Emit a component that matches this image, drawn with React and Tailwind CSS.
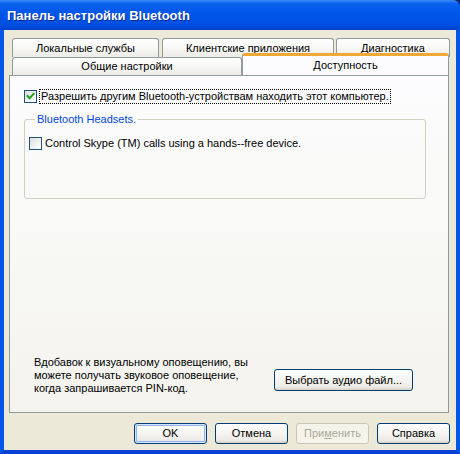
import React from "react";

function CheckBox({ checked }) {
  return (
    <div className="w-[13px] h-[13px] shrink-0 border border-[#1C5180] bg-[linear-gradient(135deg,#DCDCD7_0%,#F4F4F1_60%,#FFFFFF_100%)] flex items-center justify-center">
      {checked && (
        <svg width="11" height="11" viewBox="0 0 11 11">
          <polyline points="2.5,5 4.5,7.3 8.7,2.8" fill="none" stroke="#21A121" strokeWidth="2" strokeLinecap="square" />
        </svg>
      )}
    </div>
  );
}

function Btn({ children, className = "", def = false, disabled = false }) {
  const base = disabled
    ? "border-[#C9C7BA] bg-[#F5F4EA] text-[#ACA899]"
    : "border-[#003C74] bg-[linear-gradient(180deg,#FFFFFF_0%,#F6F6F3_40%,#ECEBE6_85%,#D6D0C5_100%)] text-black";
  const ring = def ? "shadow-[inset_0_0_0_1px_#CEE7FF,inset_0_0_0_2px_#98B4EE]" : "";
  return (
    <div className={`h-[21px] border rounded-[3px] flex items-center justify-center ${base} ${ring} ${className}`}>
      {children}
    </div>
  );
}

function Tab({ children, className = "" }) {
  return (
    <div className={`border border-b-0 border-[#919B9C] rounded-t-[3px] bg-[linear-gradient(180deg,#FFFFFF_0%,#F7F7F5_50%,#ECEBE6_100%)] flex items-center justify-center ${className}`}>
      {children}
    </div>
  );
}

export default function App() {
  return (
    <div className="w-[460px] h-[454px] flex flex-col overflow-hidden bg-[#0A246A] font-['Liberation_Sans',Arial,sans-serif] text-[11px] text-black">
      <div className="h-[30px] shrink-0 rounded-tr-[7px] bg-[linear-gradient(180deg,#3D8DF7_0%,#0A62F0_12%,#0056E8_45%,#0051E2_80%,#0042CF_100%)] flex items-center pl-[7px]">
        <span className="text-white font-bold text-[13px] leading-none [text-shadow:1px_1px_0_#0A2A9A]">
          Панель настройки Bluetooth
        </span>
      </div>
      <div className="flex-1 border-x-4 border-b-4 border-x-[#0556E8] border-b-[#0840D4] bg-[#ECE9D8] flex flex-col pt-[8px]">
        {/* tab strip */}
        <div className="pl-[8px] flex flex-col">
          <div className="h-[19px] flex gap-[3px]">
            <Tab className="w-[147px]">Локальные службы</Tab>
            <Tab className="w-[172px]">Клиентские приложения</Tab>
            <Tab className="w-[114px] ml-[-1px]">Диагностика</Tab>
          </div>
          <div className="h-[18px] flex">
            <Tab className="w-[230px] h-[18px]">Общие настройки</Tab>
            <div className="relative z-10 w-[207px] h-[22px] -mt-[4px] border border-b-0 border-[#919B9C] border-t-[3px] border-t-[#F1A834] rounded-t-[3px] bg-[#FCFCFE] flex items-center justify-center">
              Доступность
            </div>
          </div>
        </div>
        {/* panel */}
        <div className="ml-[5px] w-[440px] h-[338px] border border-[#919B9C] bg-[linear-gradient(180deg,#FCFCFE_0%,#F8F8F5_50%,#F4F3EE_100%)] flex flex-col">
          <div className="ml-[14px] mt-[13px] h-[15px] flex items-center">
            <CheckBox checked />
            <span className="ml-[2px] h-[15px] px-[1px] border border-dotted border-black flex items-center leading-none">
              Разрешить другим Bluetooth-устройствам находить этот компьютер.
            </span>
          </div>
          <fieldset className="ml-[14px] mt-[9px] w-[402px] h-[86px] border border-[#D0D0BF] rounded-[3px] pl-[4px]">
            <legend className="ml-[6px] px-[2px] text-[#0046D5] leading-[13px]">Bluetooth Headsets.</legend>
            <div className="mt-[11px] flex items-center">
              <CheckBox />
              <span className="ml-[3px] leading-none">Control Skype (TM) calls using a hands--free device.</span>
            </div>
          </fieldset>
          <div className="mt-auto mb-[17px] pl-[24px] flex items-start">
            <div className="w-[240px] leading-[13px] whitespace-nowrap">
              Вдобавок к визуальному оповещению, вы
              <br />
              можете получать звуковое оповещение,
              <br />
              когда запрашивается PIN-код.
            </div>
            <Btn className="w-[139px] h-[22px] mt-[13px]">Выбрать аудио файл...</Btn>
          </div>
        </div>
        {/* buttons */}
        <div className="mt-[10px] pl-[130px] flex gap-[8px]">
          <Btn def className="w-[73px]">OK</Btn>
          <Btn className="w-[73px]">Отмена</Btn>
          <Btn disabled className="w-[73px]">
            При<span className="underline">м</span>енить
          </Btn>
          <Btn className="w-[73px]">Справка</Btn>
        </div>
      </div>
    </div>
  );
}
